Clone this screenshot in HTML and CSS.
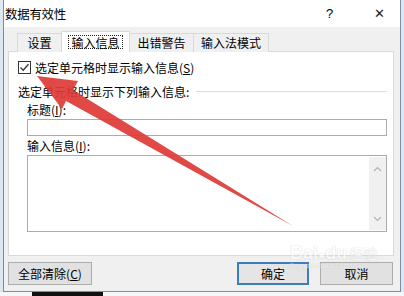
FILE: index.html
```html
<!DOCTYPE html>
<html lang="zh-CN">
<head>
    <meta charset="UTF-8">
    <meta name="viewport" content="width=device-width, initial-scale=1.0">
    <title>数据有效性</title>
    <link rel="stylesheet" href="styles.css">
</head>
<body>
    <div class="screen">
        <div class="dialog">
            <div class="titlebar">
                <span class="title">数据有效性</span>
                <span class="help">?</span>
                <span class="close">✕</span>
            </div>
            <div class="body">
                <div class="tabs">
                    <div class="tab tab-1">设置</div>
                    <div class="tab tab-2 active"><span class="focus">输入信息</span></div>
                    <div class="tab tab-3">出错警告</div>
                    <div class="tab tab-4">输入法模式</div>
                </div>
                <div class="panel">
                    <div class="check-row">
                        <span class="checkbox">
                            <svg width="11" height="11" viewBox="0 0 11 11"><path d="M1.5 5.5 L4.2 8.2 L9.5 2.2" fill="none" stroke="#333" stroke-width="1.3"/></svg>
                        </span>
                        <span>选定单元格时显示输入信息(<u>S</u>)</span>
                    </div>
                    <div class="group">
                        <span>选定单元格时显示下列输入信息:</span>
                        <span class="group-line"></span>
                    </div>
                    <div class="fields">
                        <div class="label label-title">标题(<u>I</u>):</div>
                        <div class="input"></div>
                        <div class="label">输入信息(<u>I</u>):</div>
                        <div class="textarea">
                            <div class="scroll">
                                <svg width="9" height="6" viewBox="0 0 9 6"><path d="M1 5 L4.5 1.5 L8 5" fill="none" stroke="#b4b4b4" stroke-width="1.2"/></svg>
                                <svg width="9" height="6" viewBox="0 0 9 6"><path d="M1 1 L4.5 4.5 L8 1" fill="none" stroke="#b4b4b4" stroke-width="1.2"/></svg>
                            </div>
                        </div>
                    </div>
                </div>
                <div class="buttons">
                    <div class="btn btn-clear">全部清除(<u>C</u>)</div>
                    <div class="btn btn-ok">确定</div>
                    <div class="btn btn-cancel">取消</div>
                </div>
            </div>
        </div>
        <div class="sheet">
            <div class="cell-black"></div>
        </div>

        <!-- 水印 -->
        <div class="watermark">
            <span class="wm-big">Bai</span><span class="wm-paw">●</span><span class="wm-big">du</span><span class="wm-cn">经验</span>
            <div class="wm-small">jingyan.baidu.com</div>
        </div>

        <!-- 红色箭头 -->
        <svg class="arrow" width="404" height="296" viewBox="0 0 404 296">
            <polygon points="37,76 78,81 73,90 293,226 66,101 62,109" fill="#de3a36" opacity="0.92"/>
        </svg>
    </div>
</body>
</html>
```

FILE: styles.css
```css
*{
    box-sizing: border-box;
}

body{
    margin: 0;
    font-family: "Noto Sans CJK SC", "Noto Sans", sans-serif;
    font-size: 12px;
    color: #000;
}

.screen{
    position: relative;
    width: 404px;
    height: 296px;
    overflow: hidden;
    background-color: #dde7ef;
}

.dialog{
    margin-left: 3px;
    width: 398px;
    height: 292px;
    border: 1px solid #7a8ea3;
    border-top: none;
    background-color: #f0f0f0;
    display: flex;
    flex-direction: column;
}

/* 标题栏 */
.titlebar{
    height: 27px;
    background-color: #fff;
    display: flex;
    align-items: center;
    padding-left: 1px;
}
.title{
    font-size: 12.5px;
    flex: 1;
    letter-spacing: -0.3px;
}
.help{
    font-family: "Liberation Sans", sans-serif;
    font-size: 13px;
    width: 10px;
    margin-right: 38px;
}
.close{
    font-family: "DejaVu Sans", sans-serif;
    font-size: 13px;
    color: #222;
    margin-right: 15px;
}

.body{
    flex: 1;
    display: flex;
    flex-direction: column;
}

/* 选项卡 */
.tabs{
    display: flex;
    align-items: flex-end;
    height: 25px;
    padding-left: 14px;
    margin-bottom: -1px;
    position: relative;
    z-index: 1;
}
.tab{
    height: 19px;
    border: 1px solid #d9d9d9;
    border-bottom: none;
    background-color: #f0f0f0;
    text-align: center;
    line-height: 17px;
    margin-left: -1px;
}
.tab-1{ width: 45px; }
.tab-2{ width: 69px; }
.tab-3{ width: 65px; }
.tab-4{ width: 76px; }
.tab.active{
    height: 21px;
    background-color: #fff;
    padding-top: 3px;
    line-height: 13px;
}
.focus{
    display: inline-block;
    border: 1px dotted #222;
    padding: 0 2px;
    height: 14px;
}

/* 面板 */
.panel{
    margin: 0 6px 0 4px;
    height: 205px;
    background-color: #fff;
    border: 1px solid #d9d9d9;
    padding: 7px 6px 0 9px;
}
.check-row{
    display: flex;
    align-items: center;
    height: 16px;
    gap: 4px;
}
.checkbox{
    width: 13px;
    height: 13px;
    border: 1px solid #333;
    display: flex;
    align-items: center;
    justify-content: center;
}
.group{
    display: flex;
    align-items: center;
    height: 16px;
    margin-top: 8px;
}
.group-line{
    flex: 1;
    height: 1px;
    background-color: #dcdcdc;
    margin-left: 7px;
}
.fields{
    padding-left: 9px;
}
.label{
    height: 16px;
    line-height: 16px;
    margin-top: 2px;
}
.label-title{
    margin-top: 3px;
}
.input{
    height: 17px;
    border: 1px solid #ababab;
    margin-top: 1px;
}
.textarea{
    height: 77px;
    border: 1px solid #ababab;
    margin-top: 1px;
    display: flex;
    justify-content: flex-end;
}
.scroll{
    width: 17px;
    margin: 1px 0;
    background-color: #f0f0f0;
    display: flex;
    flex-direction: column;
    justify-content: space-between;
    align-items: center;
    padding: 9px 0 8px;
}

/* 按钮 */
.buttons{
    display: flex;
    margin: 6px 0 0 4px;
}
.btn{
    height: 23px;
    background-color: #e1e1e1;
    border: 1px solid #adadad;
    text-align: center;
    line-height: 21px;
}
.btn-clear{
    width: 84px;
}
.btn-ok{
    width: 72px;
    margin-left: 145px;
    border: 2px solid #3c7dbb;
    line-height: 19px;
    background-color: #e5e5e5;
}
.btn-cancel{
    width: 73px;
    margin-left: 11px;
}

/* 下方表格 */
.sheet{
    height: 4px;
    background-color: #f4f6f8;
    position: relative;
}
.cell-black{
    margin-left: 32px;
    width: 71px;
    height: 4px;
    background-color: #111;
}

.watermark{
    position: absolute;
    left: 290px;
    top: 243px;
    color: #fff;
    opacity: 0.55;
    font-family: "Liberation Sans", sans-serif;
    text-shadow: 0 0 1px #b8b8b8, 0 0 1px #b8b8b8;
}
.wm-big{
    font-size: 18px;
    font-weight: bold;
}
.wm-paw{
    font-size: 12px;
}
.wm-cn{
    font-family: "Noto Sans CJK SC", sans-serif;
    font-size: 14px;
    margin-left: 2px;
}
.wm-small{
    font-size: 8px;
    margin-top: -3px;
}

.arrow{
    position: absolute;
    left: 0;
    top: 0;
    pointer-events: none;
}
```
